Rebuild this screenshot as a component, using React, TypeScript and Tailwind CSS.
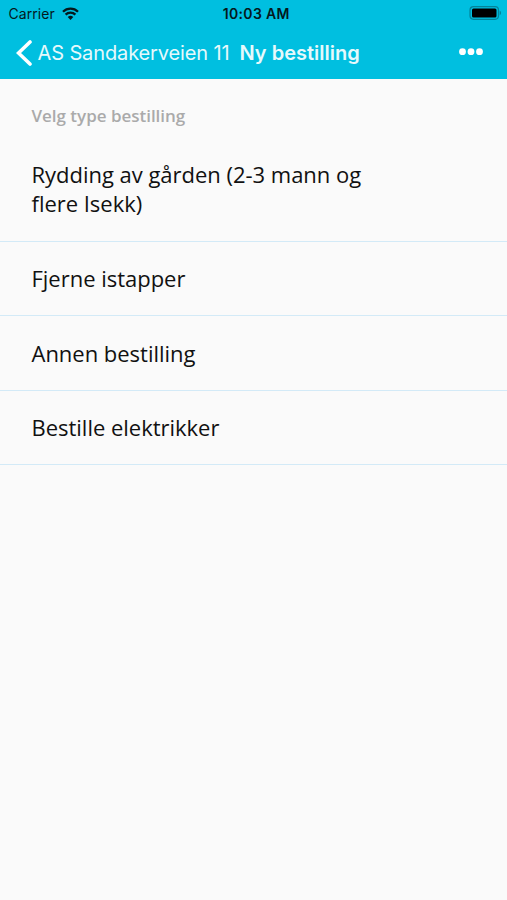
import React from "react";

const orders: string[][] = [
  ["Rydding av gården (2-3 mann og", "flere Isekk)"],
  ["Fjerne istapper"],
  ["Annen bestilling"],
  ["Bestille elektrikker"],
];

export default function App() {
  return (
    <div className="h-[900px] w-full bg-[#fafafa] text-[#111111]">
      <header className="h-[79px] bg-[#00bfe0] font-['Inter',sans-serif]">
        <div className="flex h-[27px] items-center justify-between pl-[8.5px] pr-[5px] text-[#04191d]">
          <div className="flex w-[200px] items-center gap-[7px]">
            <span className="w-[46px] text-[14px] leading-none tracking-[0.05px]">Carrier</span>
            <svg className="-mt-px" width="17" height="13" viewBox="0 0 17 13" fill="none" stroke="currentColor" strokeWidth="2.3">
              <path d="M1 4.7a10.7 10.7 0 0 1 15 0M3.6 7.6a7 7 0 0 1 9.8 0" />
              <path d="M8.5 13 5.7 10a4 4 0 0 1 5.6 0Z" fill="currentColor" stroke="none" />
            </svg>
          </div>
          <span className="ml-[2px] whitespace-nowrap text-[14px] font-semibold leading-none tracking-[0.35px]">10:03 AM</span>
          <div className="flex w-[200px] justify-end">
            <svg className="-mt-px" width="33" height="14" viewBox="0 0 33 14">
              <rect x="1" y=".7" width="28.5" height="12.6" rx="3.5" fill="none" stroke="#03849a" strokeWidth="1.2" />
              <rect x="3" y="2.5" width="24.5" height="9" rx="1.5" fill="black" />
              <path d="M30.7 4.8c1.8.6 1.8 3.8 0 4.4Z" fill="#03849a" />
            </svg>
          </div>
        </div>
        <div className="flex h-[51px] items-center pl-4 pr-6 text-[#e6f9fc]">
          <svg className="text-white" width="17" height="28" viewBox="0 0 17 28" fill="none" stroke="currentColor" strokeWidth="3.6" strokeLinecap="round">
            <path d="M14 3 2.5 14 14 25" />
          </svg>
          <span className="ml-[4.5px] w-[202px] whitespace-nowrap text-[20px] tracking-[-0.12px]">AS Sandakerveien 11</span>
          <h1 className="whitespace-nowrap text-[20px] font-semibold">Ny bestilling</h1>
          <svg className="-mt-px ml-auto text-white" width="24" height="8" viewBox="0 0 24 8" fill="currentColor">
            <circle cx="3.5" cy="3.7" r="3.4" /><circle cx="12" cy="3.7" r="3.4" /><circle cx="20.5" cy="3.7" r="3.4" />
          </svg>
        </div>
      </header>
      <main className="font-['Open_Sans',sans-serif]">
        <h2 className="flex h-[66px] items-center pl-[31.5px] pt-[7px] text-[17px] font-semibold tracking-[-0.02px] text-[#aaaaaa]">Velg type bestilling</h2>
        <ul>
          {orders.map((lines) => (
            <li key={lines[0]} className="border-b border-[#d3eaf7] pb-[22px] pl-[31.5px] pt-[21.5px] text-[22px] leading-[30px] tracking-[-0.02px] first:pb-[22px] first:pt-[14.7px] first:leading-[29.6px]">
              {lines.map((line) => <span key={line} className="block whitespace-nowrap">{line}</span>)}
            </li>
          ))}
        </ul>
      </main>
    </div>
  );
}
